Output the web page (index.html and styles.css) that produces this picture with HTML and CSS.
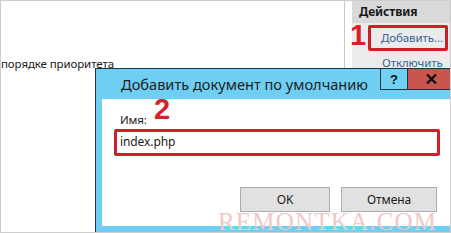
FILE: index.html
```html
<!DOCTYPE html>
<html lang="ru">
<head>
<meta charset="utf-8">
<title>Добавить документ по умолчанию</title>
<link rel="stylesheet" href="styles.css">
</head>
<body>
<div class="frame">
  <section class="main">
    <div class="list-text">порядке приоритета</div>
  </section>
  <div class="gap"></div>
  <aside class="actions">
    <div class="actions-head">Действия</div>
    <div class="action-row">
      <span class="mark mark-1">1</span>
      <a class="action-link boxed">Добавить...</a>
    </div>
    <div class="action-row plain">
      <a class="action-link">Отключить</a>
    </div>
  </aside>

  <div class="dialog">
    <div class="title-bar">
      <div class="title">Добавить документ по умолчанию</div>
      <div class="cap-btn help">?</div>
      <div class="cap-btn close">
        <svg width="11" height="10" viewBox="0 0 11 10"><path d="M1 0.5 L10 9.5 M10 0.5 L1 9.5" stroke="#111" stroke-width="2.4"/></svg>
      </div>
    </div>
    <div class="dialog-body">
      <span class="mark mark-2">2</span>
      <div class="label">Имя:</div>
      <div class="input">index.php</div>
      <div class="buttons">
        <div class="btn ok">OK</div>
        <div class="btn cancel">Отмена</div>
      </div>
    </div>
  </div>

  <div class="watermark">REMONTKA.COM</div>
</div>
</body>
</html>
```

FILE: styles.css
```css
html, body {
  margin: 0;
  padding: 0;
  background: #ffffff;
}

.frame {
  position: relative;
  width: 451px;
  height: 233px;
  box-sizing: border-box;
  border: 1px solid #cdcdcd;
  display: flex;
  overflow: hidden;
  font-family: "Noto Sans", "Open Sans", sans-serif;
  font-size: 11.5px;
  letter-spacing: -0.1px;
  color: #1a1a1a;
  background: #ffffff;
}

.main {
  width: 343px;
  flex: none;
  border-right: 1px solid #c9c9c9;
}

.list-text {
  padding-top: 55px;
  line-height: 16px;
  white-space: nowrap;
}

.gap {
  width: 7px;
  flex: none;
}

.actions {
  flex: 1;
  background: #ebebeb;
}

.actions-head {
  height: 22px;
  line-height: 22px;
  background: #d9d9d9;
  padding-left: 7px;
  font-weight: bold;
  font-size: 12px;
  color: #1a1a1a;
}

.action-row {
  position: relative;
  display: flex;
  padding-left: 16px;
  padding-top: 2px;
}

.action-row.plain {
  padding-left: 30px;
  padding-top: 4px;
}

.action-link {
  color: #3a6296;
  line-height: 16px;
  white-space: nowrap;
}

.boxed {
  box-sizing: border-box;
  width: 80px;
  height: 26px;
  border: 3px solid #cf1f27;
  border-radius: 2px;
  padding-left: 10px;
  line-height: 19px;
}

.mark {
  position: absolute;
  font-family: "Liberation Sans", Arial, sans-serif;
  font-weight: bold;
  font-size: 29px;
  line-height: 29px;
  letter-spacing: 0;
  color: #d9202a;
}

.mark-1 {
  left: -2px;
  top: -2px;
}

.dialog {
  position: absolute;
  left: 94px;
  top: 67px;
  width: 368px;
  box-sizing: border-box;
  border: 1px solid #1d3446;
  background: #6fcff3;
  padding: 0 6px 7px 6px;
}

.title-bar {
  display: flex;
  height: 30px;
}

.title {
  flex: 1;
  min-width: 0;
  padding-left: 19px;
  line-height: 30px;
  font-size: 14.6px;
  letter-spacing: 0;
  color: #1e1e1e;
  white-space: nowrap;
  overflow: hidden;
}

.cap-btn {
  flex: none;
  box-sizing: border-box;
  height: 21px;
  display: flex;
  align-items: center;
  justify-content: center;
  border: 1px solid #1d3446;
  border-top: none;
}

.help {
  width: 28px;
  background: #72d0f2;
  font-family: "Liberation Sans", Arial, sans-serif;
  font-weight: bold;
  font-size: 13px;
  color: #111;
}

.close {
  width: 48px;
  background: #c9564c;
  border-left: none;
}

.dialog-body {
  position: relative;
  background: #ffffff;
  height: 127px;
  padding-left: 12px;
  padding-right: 19px;
  box-sizing: border-box;
}

.mark-2 {
  left: 52px;
  top: -4px;
}

.label {
  padding-top: 12px;
  padding-left: 6px;
  line-height: 18px;
}

.input {
  box-sizing: border-box;
  width: 326px;
  height: 27px;
  border: 3px solid #cf1f27;
  border-radius: 2px;
  padding-left: 3px;
  line-height: 20px;
  font-size: 12px;
}

.buttons {
  display: flex;
  justify-content: flex-end;
  gap: 11px;
  margin-top: 31px;
}

.btn {
  box-sizing: border-box;
  height: 25px;
  line-height: 23px;
  text-align: center;
  background: #e1e1e1;
  border: 1px solid #adadad;
  font-size: 12px;
}

.ok {
  width: 90px;
}

.cancel {
  width: 96px;
}

.watermark {
  position: absolute;
  left: 217px;
  top: 210px;
  font-family: "Liberation Serif", "Times New Roman", serif;
  font-size: 25px;
  line-height: 22px;
  letter-spacing: 1.2px;
  color: #efc9c9;
  white-space: nowrap;
}
```
